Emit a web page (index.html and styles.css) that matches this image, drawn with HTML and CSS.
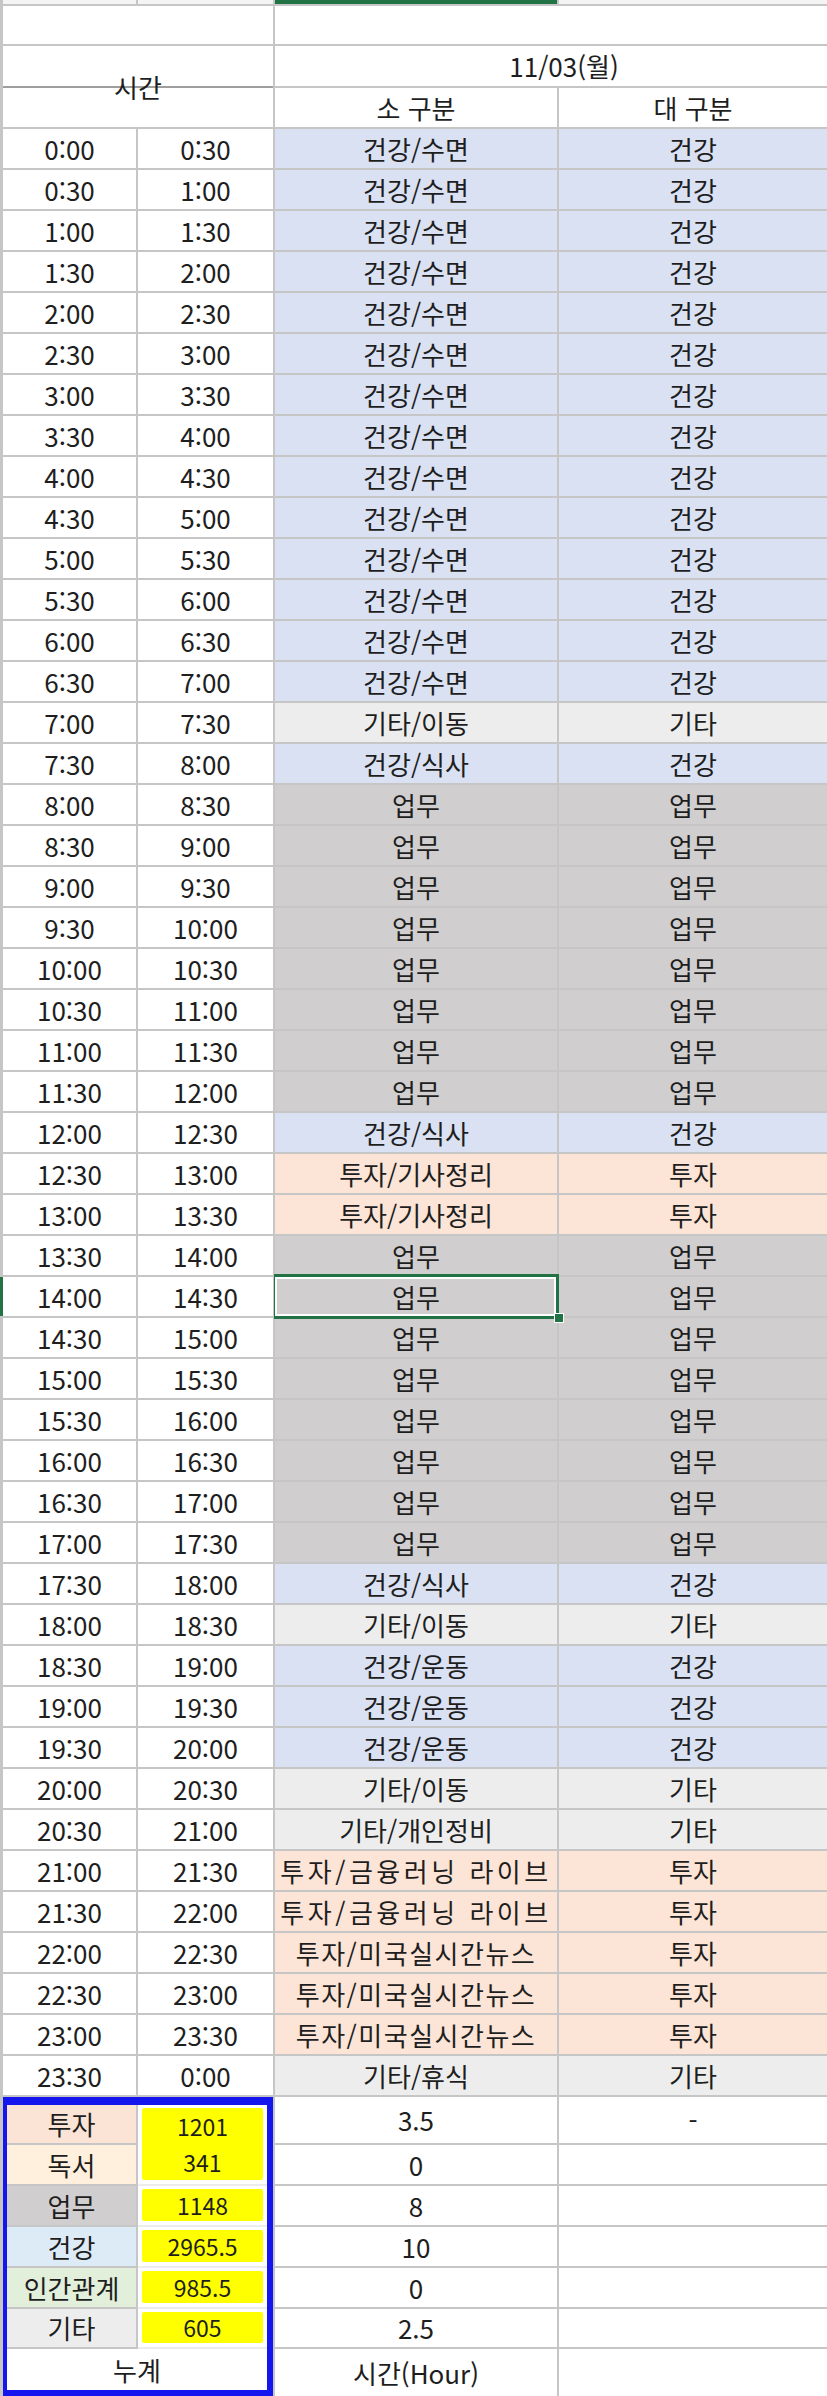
FILE: index.html
```html
<!DOCTYPE html>
<html lang="ko">
<head>
<meta charset="utf-8">
<title>시간 기록</title>
<link rel="stylesheet" href="styles.css">
</head>
<body>
<div class="sheet">
  <div class="c strip"></div><div class="c strip"></div><div class="c strip sel-col"></div><div class="c strip"></div>
  <div class="c span2"></div><div class="c span2"></div>
  <div class="c time-head">시간</div>
  <div class="c span2 date">11/03(월)</div>
  <div class="c">소 구분</div><div class="c">대 구분</div>

  <div class="c">0:00</div><div class="c">0:30</div><div class="c h">건강/수면</div><div class="c h">건강</div>
  <div class="c">0:30</div><div class="c">1:00</div><div class="c h">건강/수면</div><div class="c h">건강</div>
  <div class="c">1:00</div><div class="c">1:30</div><div class="c h">건강/수면</div><div class="c h">건강</div>
  <div class="c">1:30</div><div class="c">2:00</div><div class="c h">건강/수면</div><div class="c h">건강</div>
  <div class="c">2:00</div><div class="c">2:30</div><div class="c h">건강/수면</div><div class="c h">건강</div>
  <div class="c">2:30</div><div class="c">3:00</div><div class="c h">건강/수면</div><div class="c h">건강</div>
  <div class="c">3:00</div><div class="c">3:30</div><div class="c h">건강/수면</div><div class="c h">건강</div>
  <div class="c">3:30</div><div class="c">4:00</div><div class="c h">건강/수면</div><div class="c h">건강</div>
  <div class="c">4:00</div><div class="c">4:30</div><div class="c h">건강/수면</div><div class="c h">건강</div>
  <div class="c">4:30</div><div class="c">5:00</div><div class="c h">건강/수면</div><div class="c h">건강</div>
  <div class="c">5:00</div><div class="c">5:30</div><div class="c h">건강/수면</div><div class="c h">건강</div>
  <div class="c">5:30</div><div class="c">6:00</div><div class="c h">건강/수면</div><div class="c h">건강</div>
  <div class="c">6:00</div><div class="c">6:30</div><div class="c h">건강/수면</div><div class="c h">건강</div>
  <div class="c">6:30</div><div class="c">7:00</div><div class="c h">건강/수면</div><div class="c h">건강</div>
  <div class="c">7:00</div><div class="c">7:30</div><div class="c e">기타/이동</div><div class="c e">기타</div>
  <div class="c">7:30</div><div class="c">8:00</div><div class="c h">건강/식사</div><div class="c h">건강</div>
  <div class="c">8:00</div><div class="c">8:30</div><div class="c w">업무</div><div class="c w">업무</div>
  <div class="c">8:30</div><div class="c">9:00</div><div class="c w">업무</div><div class="c w">업무</div>
  <div class="c">9:00</div><div class="c">9:30</div><div class="c w">업무</div><div class="c w">업무</div>
  <div class="c">9:30</div><div class="c">10:00</div><div class="c w">업무</div><div class="c w">업무</div>
  <div class="c">10:00</div><div class="c">10:30</div><div class="c w">업무</div><div class="c w">업무</div>
  <div class="c">10:30</div><div class="c">11:00</div><div class="c w">업무</div><div class="c w">업무</div>
  <div class="c">11:00</div><div class="c">11:30</div><div class="c w">업무</div><div class="c w">업무</div>
  <div class="c">11:30</div><div class="c">12:00</div><div class="c w">업무</div><div class="c w">업무</div>
  <div class="c">12:00</div><div class="c">12:30</div><div class="c h">건강/식사</div><div class="c h">건강</div>
  <div class="c">12:30</div><div class="c">13:00</div><div class="c i">투자/기사정리</div><div class="c i">투자</div>
  <div class="c">13:00</div><div class="c">13:30</div><div class="c i">투자/기사정리</div><div class="c i">투자</div>
  <div class="c">13:30</div><div class="c">14:00</div><div class="c w">업무</div><div class="c w">업무</div>
  <div class="c row-mark">14:00</div><div class="c">14:30</div><div class="c w selected">업무</div><div class="c w">업무</div>
  <div class="c">14:30</div><div class="c">15:00</div><div class="c w">업무</div><div class="c w">업무</div>
  <div class="c">15:00</div><div class="c">15:30</div><div class="c w">업무</div><div class="c w">업무</div>
  <div class="c">15:30</div><div class="c">16:00</div><div class="c w">업무</div><div class="c w">업무</div>
  <div class="c">16:00</div><div class="c">16:30</div><div class="c w">업무</div><div class="c w">업무</div>
  <div class="c">16:30</div><div class="c">17:00</div><div class="c w">업무</div><div class="c w">업무</div>
  <div class="c">17:00</div><div class="c">17:30</div><div class="c w">업무</div><div class="c w">업무</div>
  <div class="c">17:30</div><div class="c">18:00</div><div class="c h">건강/식사</div><div class="c h">건강</div>
  <div class="c">18:00</div><div class="c">18:30</div><div class="c e">기타/이동</div><div class="c e">기타</div>
  <div class="c">18:30</div><div class="c">19:00</div><div class="c h">건강/운동</div><div class="c h">건강</div>
  <div class="c">19:00</div><div class="c">19:30</div><div class="c h">건강/운동</div><div class="c h">건강</div>
  <div class="c">19:30</div><div class="c">20:00</div><div class="c h">건강/운동</div><div class="c h">건강</div>
  <div class="c">20:00</div><div class="c">20:30</div><div class="c e">기타/이동</div><div class="c e">기타</div>
  <div class="c">20:30</div><div class="c">21:00</div><div class="c e">기타/개인정비</div><div class="c e">기타</div>
  <div class="c">21:00</div><div class="c">21:30</div><div class="c i wide2">투자/금융러닝 라이브</div><div class="c i">투자</div>
  <div class="c">21:30</div><div class="c">22:00</div><div class="c i wide2">투자/금융러닝 라이브</div><div class="c i">투자</div>
  <div class="c">22:00</div><div class="c">22:30</div><div class="c i wide1">투자/미국실시간뉴스</div><div class="c i">투자</div>
  <div class="c">22:30</div><div class="c">23:00</div><div class="c i wide1">투자/미국실시간뉴스</div><div class="c i">투자</div>
  <div class="c">23:00</div><div class="c">23:30</div><div class="c i wide1">투자/미국실시간뉴스</div><div class="c i">투자</div>
  <div class="c">23:30</div><div class="c">0:00</div><div class="c e">기타/휴식</div><div class="c e">기타</div>

  <div class="totals">
    <div class="lab lab-i">투자</div>
    <div class="val val-pair"><div class="yel pair"><span>1201</span><span>341</span></div></div>
    <div class="lab lab-r">독서</div>
    <div class="lab lab-w">업무</div>
    <div class="val"><div class="yel">1148</div></div>
    <div class="lab lab-h">건강</div>
    <div class="val"><div class="yel">2965.5</div></div>
    <div class="lab lab-p">인간관계</div>
    <div class="val"><div class="yel">985.5</div></div>
    <div class="lab lab-e">기타</div>
    <div class="val"><div class="yel">605</div></div>
    <div class="sum">누계</div>
  </div>
  <div class="c">3.5</div><div class="c">-</div>
  <div class="c">0</div><div class="c"></div>
  <div class="c">8</div><div class="c"></div>
  <div class="c">10</div><div class="c"></div>
  <div class="c">0</div><div class="c"></div>
  <div class="c">2.5</div><div class="c"></div>
  <div class="c">시간(Hour)</div><div class="c"></div>
</div>
</body>
</html>
```

FILE: styles.css
```css
html, body {
  margin: 0;
  padding: 0;
  background: #ffffff;
}

.sheet {
  width: 827px;
  box-sizing: border-box;
  padding-left: 3px;
  background: #c6c6c6;
  display: grid;
  grid-template-columns: 133px 135px 282px 268px;
  grid-template-rows: 4px 38px 40px 39px repeat(48, 39px) 46px 39px 39px 39px 39px 38px 47px;
  column-gap: 2px;
  row-gap: 2px;
  font-family: "Noto Sans CJK KR", "Noto Sans", sans-serif;
  font-size: 26px;
  color: #1e1e1e;
}

.c {
  background: #ffffff;
  display: flex;
  align-items: center;
  justify-content: center;
  white-space: nowrap;
  line-height: 1;
}

.strip { background: #f4f4f4; }
.sel-col { background: #217346; }

.span2 { grid-column: span 2; }

.time-head {
  grid-column: 1 / 3;
  grid-row: 3 / 5;
  background: linear-gradient(to bottom, #ffffff 0, #ffffff 40px, #9e9e9e 40px, #9e9e9e 42px, #ffffff 42px);
}

.date {
  grid-column: 3 / 5;
  padding-left: 26px;
}

.h { background: #d9e1f2; }
.e { background: #ededed; }
.w { background: #d0cece; }
.i { background: #fce4d6; }

.wide1 { letter-spacing: 1.5px; }
.wide2 { letter-spacing: 3.5px; }

.row-mark { box-shadow: -3px 0 0 #217346; }

.selected { position: relative; }
.selected::after {
  content: "";
  position: absolute;
  left: -1px;
  top: -3px;
  right: -2px;
  bottom: -3px;
  border: 3px solid #217346;
  border-left-width: 1px;
  box-shadow: inset 0 0 0 2px #ffffff;
}
.selected::before {
  content: "";
  position: absolute;
  right: -7px;
  bottom: -7px;
  width: 8px;
  height: 8px;
  background: #217346;
  border: 1px solid #ffffff;
  z-index: 1;
}

.totals {
  grid-column: 1 / 3;
  grid-row: 53 / 60;
  background: #c6c6c6;
  border-style: solid;
  border-color: #1515ee;
  border-width: 8px 6px 6px 4px;
  display: grid;
  grid-template-columns: 129px 1fr;
  grid-template-rows: 40px 41px 41px 41px 41px 40px 1fr;
  column-gap: 2px;
}

.lab {
  box-sizing: border-box;
  border-bottom: 2px solid #c6c6c6;
  display: flex;
  align-items: center;
  justify-content: center;
  line-height: 1;
}
.lab-i { background: #fbe3d5; grid-column: 1; grid-row: 1; }
.lab-r { background: #fef0dc; grid-column: 1; grid-row: 2; }
.lab-w { background: #d0cece; grid-column: 1; grid-row: 3; }
.lab-h { background: #ddebf7; grid-column: 1; grid-row: 4; }
.lab-p { background: #e2efda; grid-column: 1; grid-row: 5; }
.lab-e { background: #ededed; grid-column: 1; grid-row: 6; }

.val {
  grid-column: 2;
  background: #ffffff;
  padding: 3px 4px 4px 4px;
  box-sizing: border-box;
  display: flex;
  border-bottom: 2px solid #ececec;
}
.val-pair { grid-row: 1 / 3; }

.yel {
  flex: 1;
  background: #ffff00;
  display: flex;
  align-items: center;
  justify-content: center;
  line-height: 1;
  font-size: 23px;
  border-radius: 2px;
}
.yel.pair {
  flex-direction: column;
  justify-content: space-around;
}

.sum {
  grid-column: 1 / 3;
  grid-row: 7;
  background: #ffffff;
  display: flex;
  align-items: center;
  justify-content: center;
  line-height: 1;
}
```
